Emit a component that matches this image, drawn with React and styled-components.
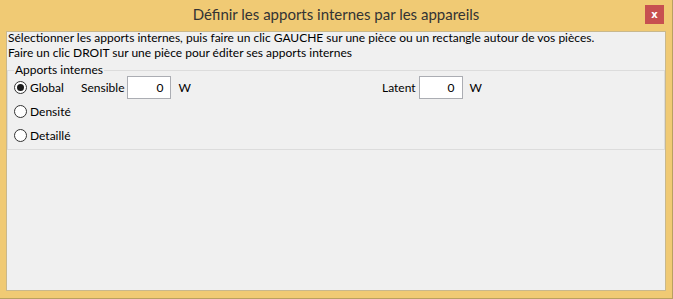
import React from 'react'
import styled, { createGlobalStyle } from 'styled-components'

const GlobalStyle = createGlobalStyle`
  html, body {
    margin: 0;
    padding: 0;
    background: #f0ca74;
  }
  body {
    font-family: Lato, "Liberation Sans", sans-serif;
    font-size: 12px;
    color: #000;
  }
`

const Window = styled.div`
  width: 673px;
  height: 299px;
  box-sizing: border-box;
  background: #f0ca74;
  border-right: 1px solid #b9a060;
  border-bottom: 1px solid #b9a060;
  display: flex;
  flex-direction: column;
  padding: 0 6px 7px 6px;
`

const TitleBar = styled.div`
  height: 31px;
  flex-shrink: 0;
  display: flex;
  align-items: center;
  justify-content: center;
  position: relative;
`

const Title = styled.div`
  font-size: 15px;
  color: #333;
  margin-top: -3px;
`

const CloseButton = styled.div`
  position: absolute;
  right: 2px;
  top: 5px;
  width: 19px;
  height: 19px;
  background: #c75050;
  color: #fff;
  font-family: "DejaVu Sans", sans-serif;
  font-weight: bold;
  font-size: 10px;
  display: flex;
  align-items: center;
  justify-content: center;
`

const Content = styled.div`
  flex: 1;
  background: #f0f0f0;
  border: 1px solid #c9b88c;
  display: flex;
  flex-direction: column;
`

const Instructions = styled.div`
  padding-left: 1px;
  line-height: 15px;
  margin-top: -2px;
`

const GroupBox = styled.fieldset`
  margin: 3px 0 0 0;
  padding: 0 0 2px 6px;
  border: 1px solid #dcdcdc;
  width: 658px;
  box-sizing: border-box;
  display: grid;
  grid-template-rows: repeat(3, 24px);
`

const Legend = styled.legend`
  padding: 0 1px;
  margin-left: 0;
  margin-bottom: -2px;
  line-height: 14px;
`

const Row = styled.div`
  display: flex;
  align-items: center;
`

const RadioLabel = styled.label`
  display: flex;
  align-items: center;
  gap: 3px;
  width: 67px;
`

const RadioCircle = styled.span`
  width: 13px;
  height: 13px;
  box-sizing: border-box;
  border: 1px solid #333;
  border-radius: 50%;
  background: #fff;
  display: flex;
  align-items: center;
  justify-content: center;

  &::after {
    content: "";
    width: 7px;
    height: 7px;
    border-radius: 50%;
    background: ${p => (p.$checked ? '#1a1a1a' : 'transparent')};
  }
`

const Field = styled.div`
  display: flex;
  align-items: center;
  width: ${p => p.$width || 'auto'};
`

const FieldLabel = styled.span`
  margin-right: 3px;
`

const NumberBox = styled.div`
  width: 44px;
  height: 23px;
  box-sizing: border-box;
  background: #fff;
  border: 1px solid #abadb3;
  display: flex;
  align-items: center;
  justify-content: flex-end;
  padding-right: 7px;
`

const Unit = styled.span`
  margin-left: 7px;
`

const Radio = ({ checked, children }) => (
  <RadioLabel>
    <RadioCircle $checked={checked} />
    {children}
  </RadioLabel>
)

const App = () => {
  return (
    <>
      <GlobalStyle />
      <Window>
        <TitleBar>
          <Title>Définir les apports internes par les appareils</Title>
          <CloseButton>x</CloseButton>
        </TitleBar>
        <Content>
          <Instructions>
            Sélectionner les apports internes, puis faire un clic GAUCHE sur une pièce ou un rectangle autour de vos pièces.
            <br />
            Faire un clic DROIT sur une pièce pour éditer ses apports internes
          </Instructions>
          <GroupBox>
            <Legend>Apports internes</Legend>
            <Row>
              <Radio checked>Global</Radio>
              <Field $width="301px">
                <FieldLabel>Sensible</FieldLabel>
                <NumberBox>0</NumberBox>
                <Unit>W</Unit>
              </Field>
              <Field>
                <FieldLabel>Latent</FieldLabel>
                <NumberBox>0</NumberBox>
                <Unit>W</Unit>
              </Field>
            </Row>
            <Row>
              <Radio>Densité</Radio>
            </Row>
            <Row>
              <Radio>Detaillé</Radio>
            </Row>
          </GroupBox>
        </Content>
      </Window>
    </>
  )
}

export default App
